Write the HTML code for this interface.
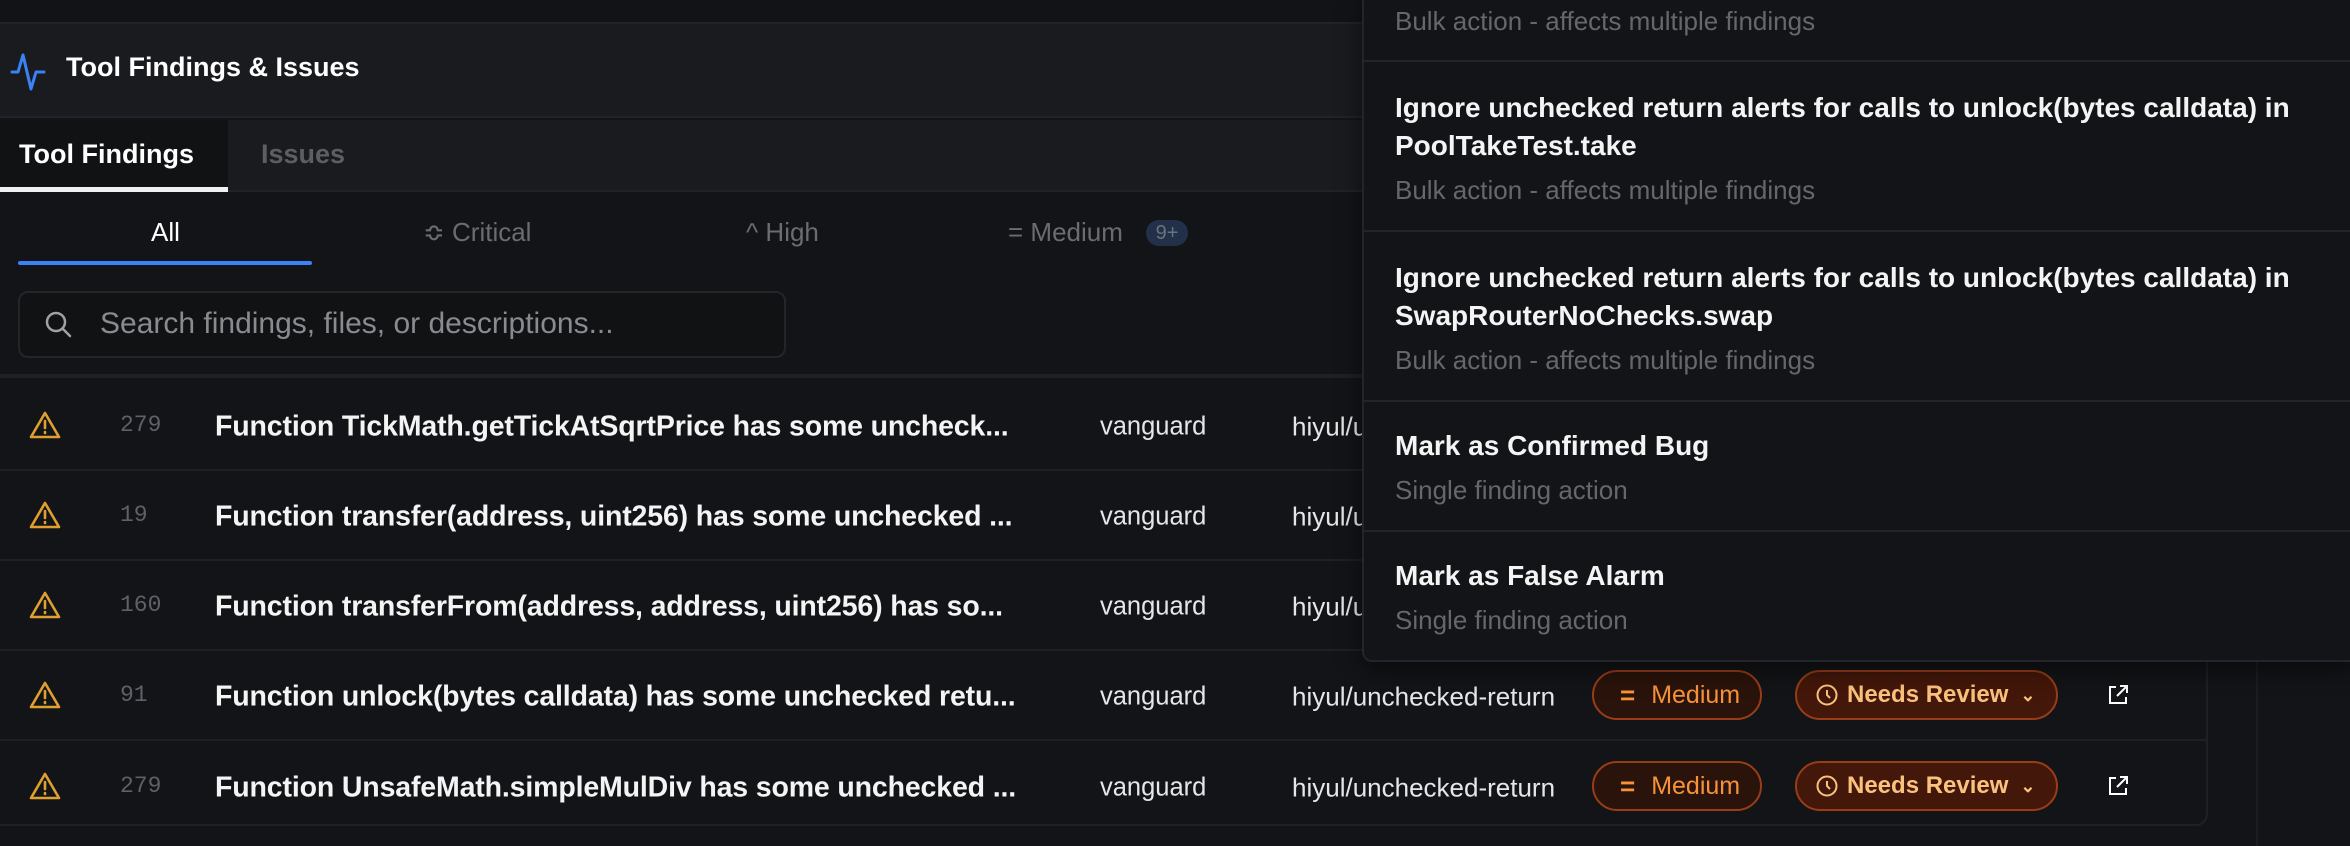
<!DOCTYPE html>
<html><head><meta charset="utf-8"><style>
*{box-sizing:border-box;margin:0;padding:0}
body{width:2350px;height:846px;overflow:hidden;background:#131417;font-family:"Liberation Sans",sans-serif;position:relative;color:#fff}
.abs{position:absolute}
.row{position:absolute;left:0;width:2208px;height:90px;border-bottom:2px solid #1f2024}
.row>*{position:absolute;top:50%;transform:translateY(-50%);white-space:nowrap}
.num{left:120px;font-family:"Liberation Mono",monospace;font-size:23px;color:#5f6068}
.ttl{left:215px;font-size:28.5px;font-weight:bold;letter-spacing:-0.15px;color:#f4f4f5;margin-top:2px}
.van{left:1100px;font-size:25.5px;color:#e6e6e8;margin-top:2px}
.rule{left:1292px;font-size:26px;color:#e6e6e8;margin-top:2px}
.pill{height:50px;border:2px solid #9a3d16;background:#2a130a;border-radius:25px;display:flex;align-items:center;font-size:24px;font-weight:bold}
.med{left:1592px;width:170px;color:#f7923a;padding-left:26px;font-weight:normal;font-size:25px}
.nr{left:1795px;width:263px;background:#431709;color:#fbc27c;padding-left:18px}
.item{position:absolute;left:1362px;width:988px;border-bottom:2px solid #24252a}
.it{position:absolute;left:1395px;font-size:28px;font-weight:bold;color:#f4f4f5;white-space:nowrap;letter-spacing:0px}
.is{position:absolute;left:1395px;font-size:26px;color:#66676d;white-space:nowrap}
.flt{position:absolute;top:217px;font-size:26px;color:#6b6c72}
</style></head><body>
<div class="abs" style="left:0;top:0;width:2350px;height:22px;background:#121316"></div>
<div class="abs" style="left:0;top:22px;width:2350px;height:96px;background:#1a1b1f;border-top:2px solid #222328;border-bottom:2px solid #222328"></div>
<svg class="abs" style="left:10px;top:52px" width="40" height="40" viewBox="0 0 40 40"><path d="M2 20h6l5-17 8 34 5-17h8" fill="none" stroke="#3b82f6" stroke-width="3" stroke-linejoin="round" stroke-linecap="round"/></svg>
<div class="abs" style="left:66px;top:52px;font-size:27px;font-weight:bold;color:#fff">Tool Findings &amp; Issues</div>
<div class="abs" style="left:0;top:120px;width:2350px;height:72px;background:#1a1b1f;border-bottom:2px solid #222328"></div>
<div class="abs" style="left:0;top:120px;width:228px;height:72px;background:#111214;border-bottom:5px solid #f0f0f0"></div>
<div class="abs" style="left:19px;top:139px;font-size:27px;font-weight:bold;color:#fff">Tool Findings</div>
<div class="abs" style="left:261px;top:139px;font-size:27px;font-weight:bold;color:#5d5e64">Issues</div>
<div class="flt" style="left:151px;color:#fff">All</div>
<div class="abs" style="left:18px;top:261px;width:294px;height:4px;background:#3b82f6;border-radius:2px"></div>
<div class="flt" style="left:423px">≎ Critical</div>
<div class="flt" style="left:746px">^ High</div>
<div class="flt" style="left:1008px">= Medium</div>
<div class="abs" style="left:1146px;top:220px;width:42px;height:26px;border-radius:13px;background:#23304a;color:#6b7280;font-size:20px;text-align:center;line-height:26px">9+</div>
<div class="abs" style="left:18px;top:291px;width:768px;height:67px;border:2px solid #24252a;border-radius:10px;background:#111214"></div>
<svg class="abs" style="left:44px;top:310px" width="30" height="30" viewBox="0 0 30 30"><circle cx="12" cy="12" r="9" fill="none" stroke="#a0a1a6" stroke-width="2.5"/><path d="M19 19l7 7" stroke="#a0a1a6" stroke-width="2.5" stroke-linecap="round"/></svg>
<div class="abs" style="left:100px;top:307px;font-size:30px;color:#8a8b91">Search findings, files, or descriptions...</div>
<div class="abs" style="left:0;top:374px;width:2350px;height:4px;border-top:2px solid #1f2024;border-bottom:2px solid #1f2024"></div>
<div class="abs" style="left:0;top:378px;width:2208px;height:448px;border-right:2px solid #1f2024;border-bottom:2px solid #1f2024;border-bottom-right-radius:12px"></div>
<div class="abs" style="left:2256px;top:0;width:2px;height:846px;background:#1c1d21"></div>

<div class="row" style="top:381px"><svg style="left:28px" width="34" height="30" viewBox="0 0 34 30"><path d="M17 3L31 27H3Z" fill="none" stroke="#e0a030" stroke-width="2.6" stroke-linejoin="round"/><path d="M17 11v7M17 22v1" stroke="#e0a030" stroke-width="2.6" stroke-linecap="round"/></svg><span class="num">279</span><span class="ttl">Function TickMath.getTickAtSqrtPrice has some uncheck...</span><span class="van">vanguard</span><span class="rule">hiyul/unchecked-return</span></div>
<div class="row" style="top:471px"><svg style="left:28px" width="34" height="30" viewBox="0 0 34 30"><path d="M17 3L31 27H3Z" fill="none" stroke="#e0a030" stroke-width="2.6" stroke-linejoin="round"/><path d="M17 11v7M17 22v1" stroke="#e0a030" stroke-width="2.6" stroke-linecap="round"/></svg><span class="num">19</span><span class="ttl">Function transfer(address, uint256) has some unchecked ...</span><span class="van">vanguard</span><span class="rule">hiyul/unchecked-return</span></div>
<div class="row" style="top:561px"><svg style="left:28px" width="34" height="30" viewBox="0 0 34 30"><path d="M17 3L31 27H3Z" fill="none" stroke="#e0a030" stroke-width="2.6" stroke-linejoin="round"/><path d="M17 11v7M17 22v1" stroke="#e0a030" stroke-width="2.6" stroke-linecap="round"/></svg><span class="num">160</span><span class="ttl">Function transferFrom(address, address, uint256) has so...</span><span class="van">vanguard</span><span class="rule">hiyul/unchecked-return</span></div>
<div class="row" style="top:651px"><svg style="left:28px" width="34" height="30" viewBox="0 0 34 30"><path d="M17 3L31 27H3Z" fill="none" stroke="#e0a030" stroke-width="2.6" stroke-linejoin="round"/><path d="M17 11v7M17 22v1" stroke="#e0a030" stroke-width="2.6" stroke-linecap="round"/></svg><span class="num">91</span><span class="ttl">Function unlock(bytes calldata) has some unchecked retu...</span><span class="van">vanguard</span><span class="rule">hiyul/unchecked-return</span>
<div class="pill med"><span style="font-size:26px;margin-right:16px;font-weight:bold">=</span>Medium</div>
<div class="pill nr"><svg width="24" height="24" viewBox="0 0 24 24" style="margin-right:8px"><circle cx="12" cy="12" r="9.5" fill="none" stroke="#fbc27c" stroke-width="2"/><path d="M12 7v5l3 3" fill="none" stroke="#fbc27c" stroke-width="2"/></svg>Needs Review<span style="font-size:18px;margin-left:12px">⌄</span></div>
<svg style="left:2106px" width="24" height="24" viewBox="0 0 24 24"><path d="M10 4H4v16h16v-6M14 3h7v7M21 3L11 13" fill="none" stroke="#fff" stroke-width="2"/></svg></div>
<div class="row" style="top:741px;border-bottom:none"><svg style="left:28px" width="34" height="30" viewBox="0 0 34 30"><path d="M17 3L31 27H3Z" fill="none" stroke="#e0a030" stroke-width="2.6" stroke-linejoin="round"/><path d="M17 11v7M17 22v1" stroke="#e0a030" stroke-width="2.6" stroke-linecap="round"/></svg><span class="num">279</span><span class="ttl">Function UnsafeMath.simpleMulDiv has some unchecked ...</span><span class="van">vanguard</span><span class="rule">hiyul/unchecked-return</span>
<div class="pill med"><span style="font-size:26px;margin-right:16px;font-weight:bold">=</span>Medium</div>
<div class="pill nr"><svg width="24" height="24" viewBox="0 0 24 24" style="margin-right:8px"><circle cx="12" cy="12" r="9.5" fill="none" stroke="#fbc27c" stroke-width="2"/><path d="M12 7v5l3 3" fill="none" stroke="#fbc27c" stroke-width="2"/></svg>Needs Review<span style="font-size:18px;margin-left:12px">⌄</span></div>
<svg style="left:2106px" width="24" height="24" viewBox="0 0 24 24"><path d="M10 4H4v16h16v-6M14 3h7v7M21 3L11 13" fill="none" stroke="#fff" stroke-width="2"/></svg></div>

<div class="abs" style="left:1362px;top:-2px;width:992px;height:664px;background:#131417;border:2px solid #24252a;border-radius:0 0 0 10px;box-shadow:0 8px 24px rgba(0,0,0,.5)"></div>
<div class="item" style="top:0;height:62px"></div>
<div class="is" style="top:6px">Bulk action - affects multiple findings</div>
<div class="item" style="top:62px;height:170px"></div>
<div class="it" style="top:92px">Ignore unchecked return alerts for calls to unlock(bytes calldata) in</div>
<div class="it" style="top:130px">PoolTakeTest.take</div>
<div class="is" style="top:175px">Bulk action - affects multiple findings</div>
<div class="item" style="top:232px;height:170px"></div>
<div class="it" style="top:262px">Ignore unchecked return alerts for calls to unlock(bytes calldata) in</div>
<div class="it" style="top:300px">SwapRouterNoChecks.swap</div>
<div class="is" style="top:345px">Bulk action - affects multiple findings</div>
<div class="item" style="top:402px;height:130px"></div>
<div class="it" style="top:430px">Mark as Confirmed Bug</div>
<div class="is" style="top:475px">Single finding action</div>
<div class="it" style="top:560px">Mark as False Alarm</div>
<div class="is" style="top:605px">Single finding action</div>
</body></html>
